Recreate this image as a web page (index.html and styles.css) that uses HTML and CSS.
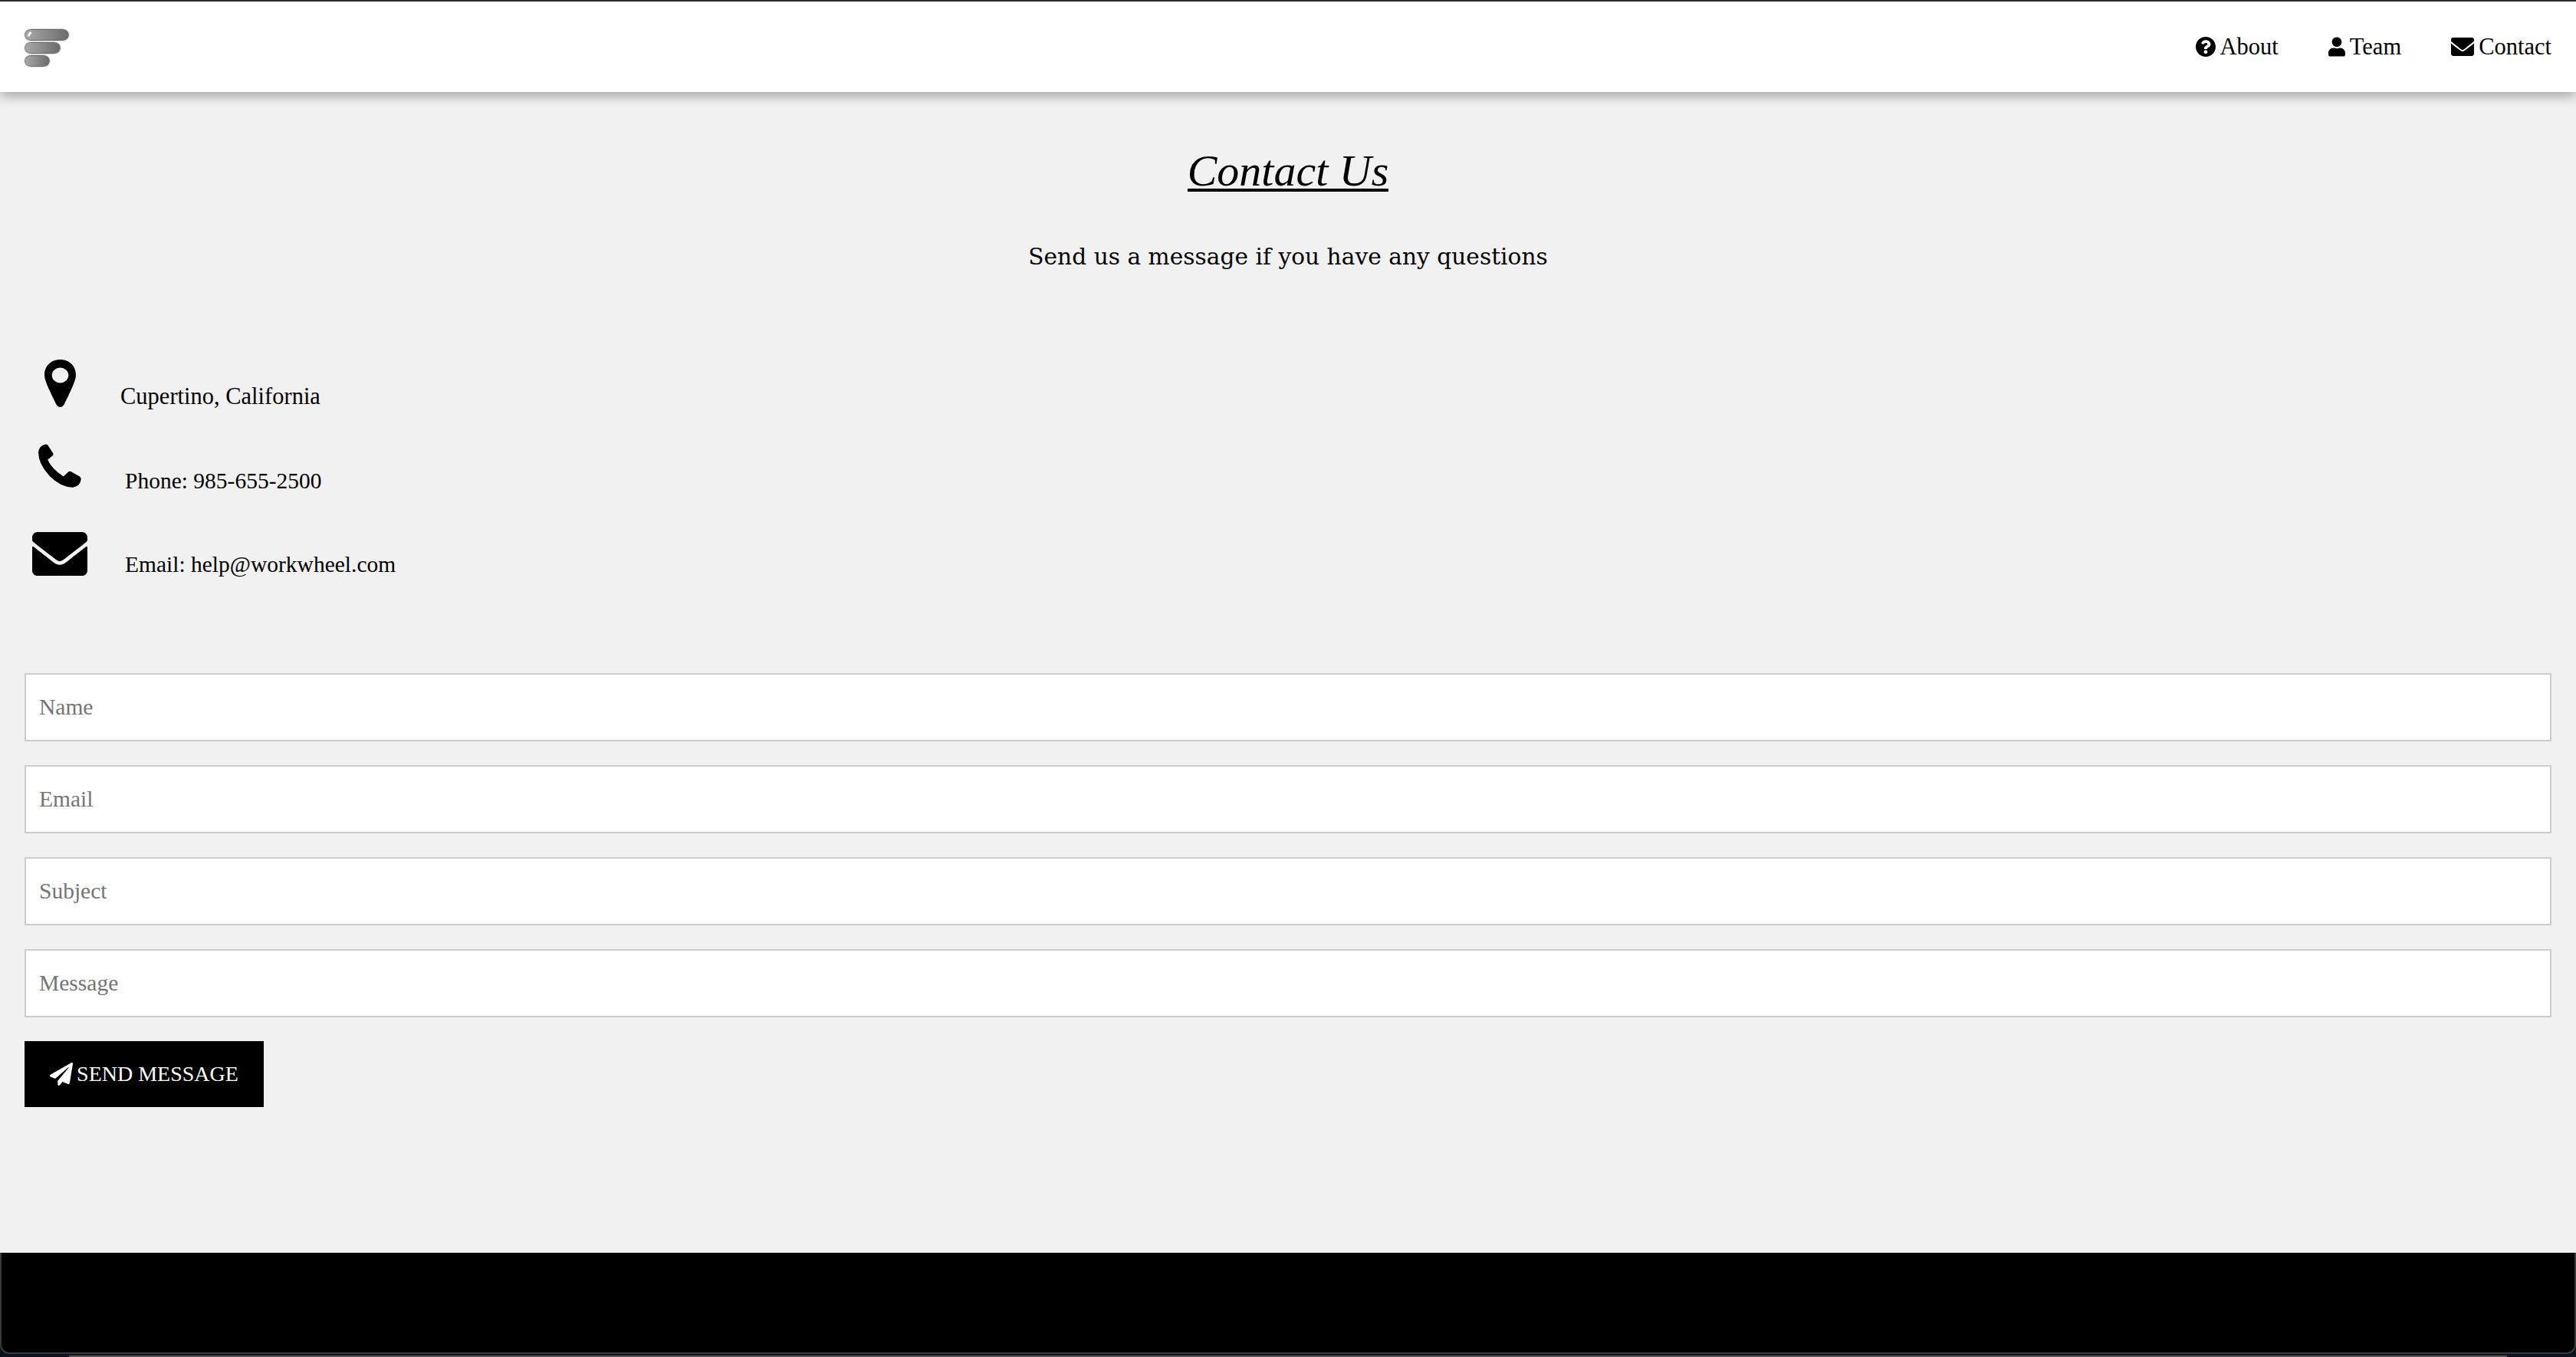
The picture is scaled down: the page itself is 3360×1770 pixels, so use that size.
FILE: index.html
```html
<!DOCTYPE html>
<html lang="en">

<head>
  <meta charset="UTF-8">
  <meta name="viewport" content="width=device-width, initial-scale=1.0">
  <title>Contact Us</title>
  <link rel="stylesheet" href="styles.css">
</head>

<body>
  <header class="navbar">
    <a class="logo" href="#" aria-label="Home">
      <span class="logo-bar logo-bar-1"></span>
      <span class="logo-bar logo-bar-2"></span>
      <span class="logo-bar logo-bar-3"></span>
    </a>
    <nav class="nav-links">
      <a href="#">
        <svg class="nav-icon" width="26" height="26" viewBox="8 8 496 496"><path d="M504 256c0 136.997-111.043 248-248 248S8 392.997 8 256C8 119.083 119.043 8 256 8s248 111.083 248 248zM262.655 90c-54.497 0-89.255 22.957-116.549 63.758-3.536 5.286-2.353 12.415 2.715 16.258l34.699 26.31c5.205 3.947 12.621 3.008 16.665-2.122 17.864-22.658 30.113-35.797 57.303-35.797 20.429 0 45.698 13.148 45.698 32.958 0 14.976-12.363 22.667-32.534 33.976C247.128 238.528 216 254.941 216 296v4c0 6.627 5.373 12 12 12h56c6.627 0 12-5.373 12-12v-1.333c0-28.462 83.186-29.647 83.186-106.667 0-58.002-60.165-102-116.531-102zM256 338c-25.365 0-46 20.635-46 46 0 25.364 20.635 46 46 46s46-20.636 46-46c0-25.365-20.635-46-46-46z"/></svg>
        About
      </a>
      <a href="#">
        <svg class="nav-icon" width="22" height="26" viewBox="0 0 448 512"><path d="M224 256c70.7 0 128-57.3 128-128S294.7 0 224 0 96 57.3 96 128s57.3 128 128 128zm89.6 32h-16.7c-22.2 10.2-46.9 16-72.9 16s-50.6-5.8-72.9-16h-16.7C60.2 288 0 348.2 0 422.4V464c0 26.5 21.5 48 48 48h352c26.5 0 48-21.5 48-48v-41.6c0-74.2-60.2-134.4-134.4-134.4z"/></svg>
        Team
      </a>
      <a href="#">
        <svg class="nav-icon" width="30" height="24" viewBox="0 64 512 384" preserveAspectRatio="none"><path d="M502.3 190.8c3.9-3.1 9.7-.2 9.7 4.7V400c0 26.5-21.5 48-48 48H48c-26.5 0-48-21.5-48-48V195.6c0-5 5.7-7.8 9.7-4.7 22.4 17.4 52.1 39.5 154.1 113.6 21.1 15.4 56.7 47.8 92.2 47.6 35.7.3 72-32.8 92.3-47.6 102-74.1 131.6-96.3 154-113.7zM256 320c23.2.4 56.6-29.2 73.4-41.4 132.7-96.3 142.8-104.7 173.4-128.7 5.8-4.5 9.2-11.5 9.2-18.9v-19c0-26.5-21.5-48-48-48H48C21.5 64 0 85.5 0 112v19c0 7.4 3.4 14.3 9.2 18.9 30.6 23.9 40.7 32.4 173.4 128.7 16.8 12.2 50.2 41.8 73.4 41.4z"/></svg>
        Contact
      </a>
    </nav>
  </header>

  <main class="content">
    <h1 class="title"><span>Contact Us</span></h1>
    <p class="subtitle">Send us a message if you have any questions</p>

    <div class="contact-list">
      <div class="contact-row">
        <span class="contact-icon">
          <svg class="icon-pin" width="41" height="62" viewBox="0 0 38 62" preserveAspectRatio="none"><path fill-rule="evenodd" d="M19 0C30 0 38 8.5 38 20C38 27 33 38 24 58Q22 62 19 62Q16 62 14 58C5 38 0 27 0 20C0 8.5 8 0 19 0ZM19 10.500a10 10 0 1 0 0 20a10 10 0 1 0 0-20Z"/></svg>
        </span>
        <span class="contact-text contact-text-first">Cupertino, California</span>
      </div>
      <div class="contact-row">
        <span class="contact-icon">
          <svg class="icon-phone" width="56" height="57" viewBox="0 0 53 57" preserveAspectRatio="none"><path d="M9 .5Q11 .2 12 2L18.300 12.500Q19 14.500 17.500 15.500L11.500 20.500Q16 32 31 42.500L37 36.500Q39 35 41 36.500L51 42.500Q53 44 52.700 46Q52 55 43 56.700Q28 57 14 42Q0 26 0 11Q1 2 9 .5Z"/></svg>
        </span>
        <span class="contact-text">Phone: 985-655-2500</span>
      </div>
      <div class="contact-row">
        <span class="contact-icon">
          <svg class="icon-mail" width="72" height="57" viewBox="0 64 512 384" preserveAspectRatio="none"><path d="M502.3 190.8c3.9-3.1 9.7-.2 9.7 4.7V400c0 26.5-21.5 48-48 48H48c-26.5 0-48-21.5-48-48V195.6c0-5 5.7-7.8 9.7-4.7 22.4 17.4 52.1 39.5 154.1 113.6 21.1 15.4 56.7 47.8 92.2 47.6 35.7.3 72-32.8 92.3-47.6 102-74.1 131.6-96.3 154-113.7zM256 320c23.2.4 56.6-29.2 73.4-41.4 132.7-96.3 142.8-104.7 173.4-128.7 5.8-4.5 9.2-11.5 9.2-18.9v-19c0-26.5-21.5-48-48-48H48C21.5 64 0 85.5 0 112v19c0 7.4 3.4 14.3 9.2 18.9 30.6 23.9 40.7 32.4 173.4 128.7 16.8 12.2 50.2 41.8 73.4 41.4z"/></svg>
        </span>
        <span class="contact-text">Email: help@workwheel.com</span>
      </div>
    </div>

    <form class="contact-form">
      <input type="text" placeholder="Name">
      <input type="text" placeholder="Email">
      <input type="text" placeholder="Subject">
      <input type="text" placeholder="Message">
      <button type="button" class="send-btn">
        <svg width="30" height="30" viewBox="0 0 512 512"><path d="M476 3.2L12.500 270.600c-18.100 10.400-15.800 35.600 2.200 43.200L121 358.400l287.300-253.200c5.500-4.900 13.300 2.600 8.600 8.300L176 407v80.500c0 23.600 28.500 32.900 42.500 15.800L282 426l124.600 52.200c14.200 6 30.400-2.900 33-18.200l72-432C515 7.800 493.300-6.800 476 3.200z"/></svg>
        SEND MESSAGE
      </button>
    </form>
  </main>

  <footer class="footer">
    <div class="footer-inner"></div>
    <div class="footer-edge"></div>
  </footer>
</body>

</html>
```

FILE: styles.css
```css
* {
  margin: 0;
  padding: 0;
  box-sizing: border-box;
}

body {
  min-height: 100vh;
  display: flex;
  flex-direction: column;
  background-color: #f1f1f1;
  color: #000;
  font-family: "Liberation Serif", serif;
}

a {
  color: inherit;
  text-decoration: none;
}

/* top bar */
.navbar {
  position: relative;
  height: 120px;
  display: flex;
  justify-content: space-between;
  align-items: center;
  padding: 0 32px;
  background-color: #fff;
  border-top: 2px solid #2b2b2b;
  box-shadow: 0 6px 14px rgba(0, 0, 0, 0.3);
}

.logo {
  display: flex;
  flex-direction: column;
  gap: 2px;
  margin-top: 2px;
}

.logo-bar {
  display: block;
  height: 15px;
  border-radius: 8px;
  border: 1px solid #6a6a6a;
  outline: 1px solid #ddd;
  background: linear-gradient(90deg, #a8a8a8, #6c6c6c);
}

.logo-bar-1 {
  position: relative;
  width: 58px;
}

.logo-bar-1::before {
  content: "";
  position: absolute;
  top: 2px;
  left: 4px;
  width: 3px;
  height: 7px;
  border-radius: 2px;
  background-color: #fff;
  transform: rotate(35deg);
}

.logo-bar-2 {
  width: 47px;
}

.logo-bar-3 {
  width: 33px;
}

.nav-links {
  display: flex;
  gap: 65px;
  font-size: 30.5px;
}

.nav-links a {
  display: flex;
  align-items: center;
  gap: 6px;
}

/* heading */
.content {
  flex: 1;
  padding: 0 32px;
}

.title {
  margin-top: 80px;
  display: flex;
  justify-content: center;
  font-weight: 400;
  font-size: 58px;
}

.title span {
  font-style: italic;
  line-height: 46px;
  border-bottom: 4px solid #000;
}

.subtitle {
  margin-top: 67px;
  text-align: center;
  font-family: "DejaVu Serif", serif;
  font-size: 29.700px;
  line-height: 36px;
}

/* address lines */
.contact-list {
  margin-top: 110px;
  display: flex;
  flex-direction: column;
  gap: 37.500px;
}

.contact-row {
  display: flex;
  align-items: flex-end;
  height: 72px;
}

.contact-icon {
  width: 92px;
  display: flex;
  justify-content: center;
}

.icon-pin {
  margin-bottom: 4px;
}

.icon-phone {
  margin-bottom: 9px;
}

.icon-mail {
  margin-bottom: 3px;
}

.contact-text {
  padding-left: 39px;
  font-size: 29.500px;
  line-height: 36px;
}

.contact-text-first {
  padding-left: 33px;
  font-size: 30.500px;
}

/* form */
.contact-form {
  margin-top: 124px;
  display: flex;
  flex-direction: column;
  align-items: flex-start;
  gap: 31px;
}

.contact-form input {
  width: 100%;
  height: 89px;
  padding: 0 17px;
  background-color: #fff;
  border: 2px solid #ccc;
  border-radius: 0;
  outline: none;
  font-family: "Liberation Serif", serif;
  font-size: 29.500px;
}

.contact-form input::placeholder {
  color: #757575;
}

.send-btn {
  width: 312px;
  height: 86px;
  display: flex;
  justify-content: center;
  align-items: center;
  gap: 5px;
  background-color: #000;
  color: #fff;
  border: none;
  font-family: "Liberation Serif", serif;
  font-size: 28px;
}

.send-btn svg {
  fill: #fff;
}

/* footer with the window edge under it */
.footer {
  height: 136px;
  display: flex;
  flex-direction: column;
  background-color: #0c1222;
}

.footer-inner {
  flex: 1;
  background-color: #000;
  border: 2px solid #3a3a3a;
  border-top: none;
  border-radius: 0 0 12px 12px;
}

.footer-edge {
  height: 2px;
  margin: 2px 90px 0;
  background-color: #555;
}
```
